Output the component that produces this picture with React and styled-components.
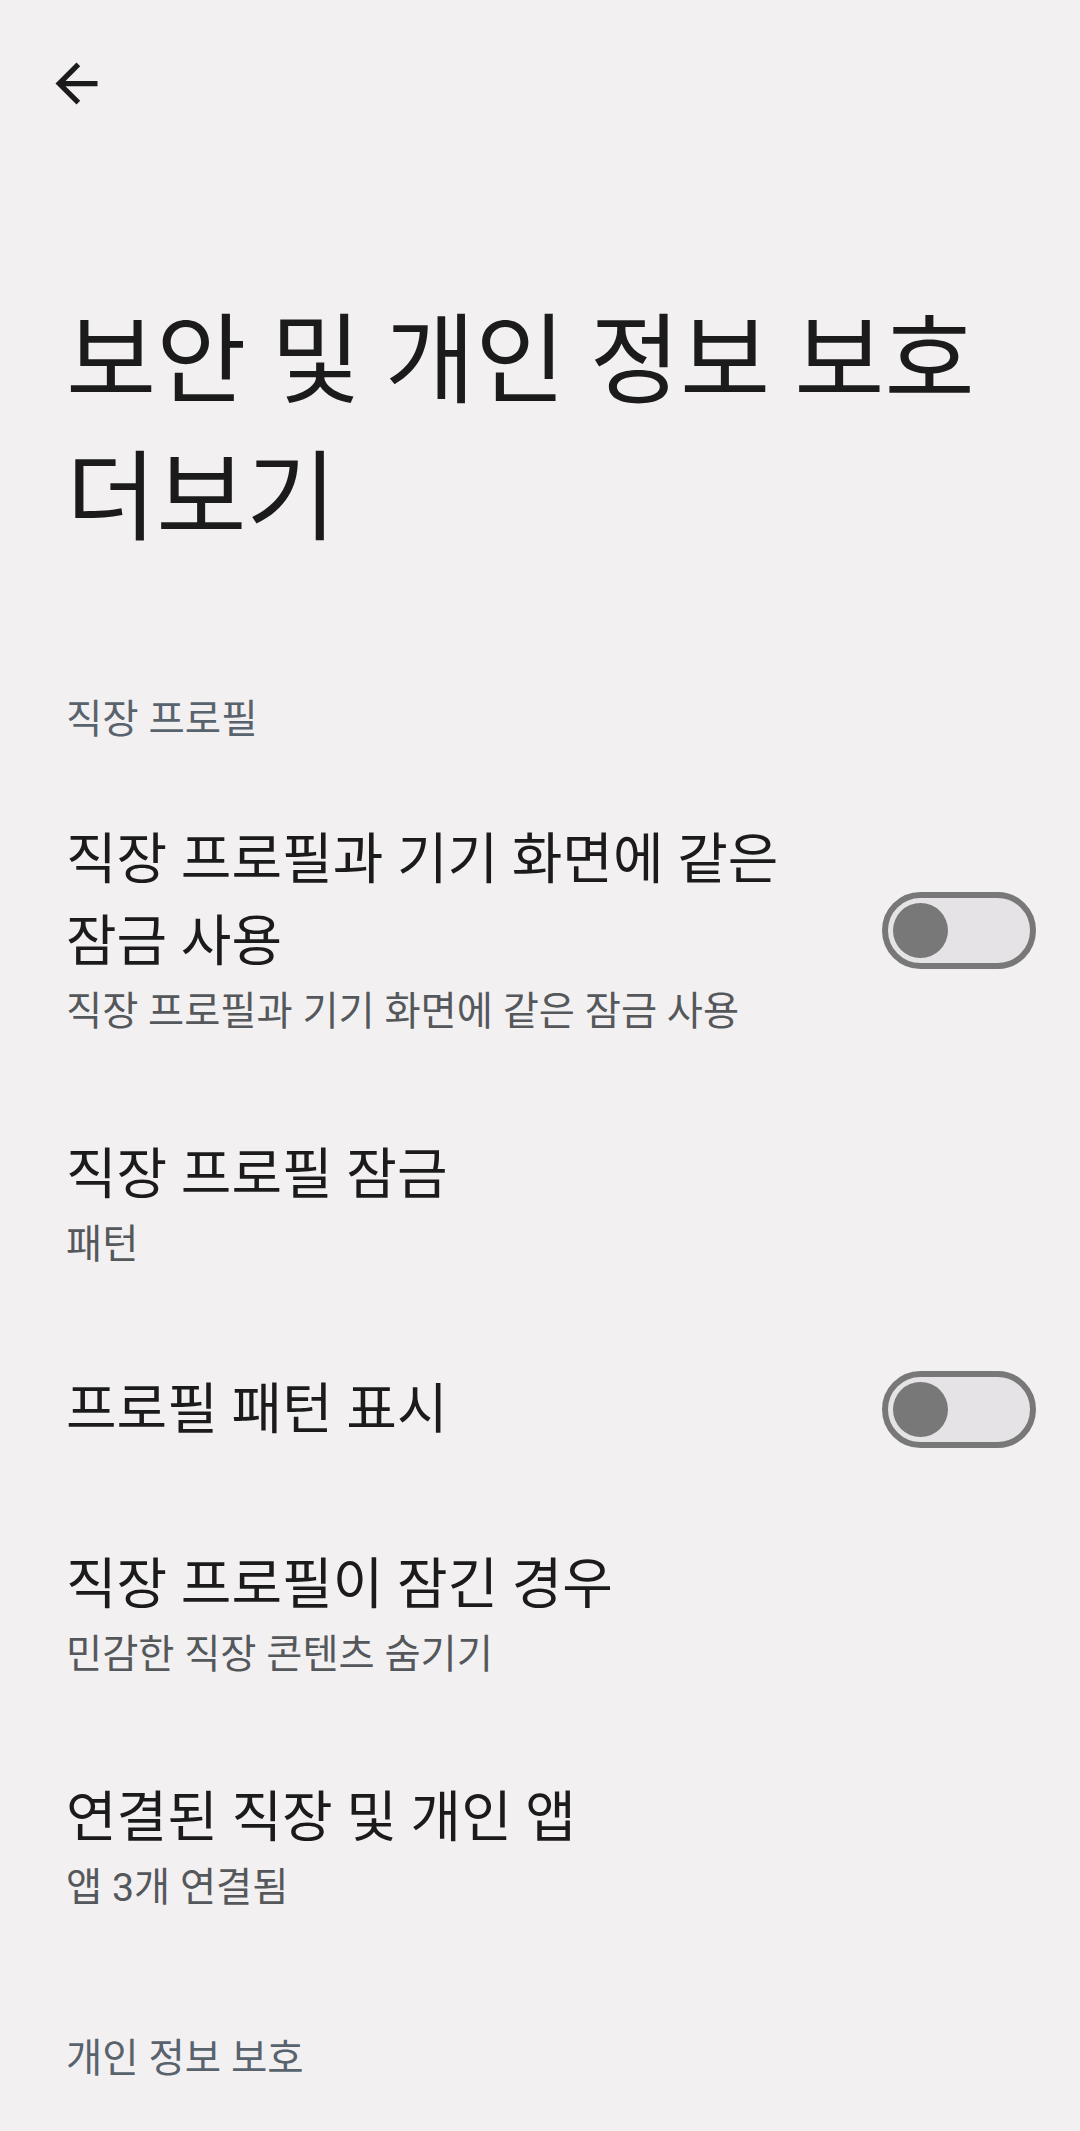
import React from 'react';
import styled, { createGlobalStyle } from 'styled-components';

const GlobalStyle = createGlobalStyle`
  html, body {
    margin: 0;
    padding: 0;
    background: #f3f0f2;
  }
  body {
    font-family: Roboto, "Noto Sans CJK KR", sans-serif;
    color: #1b1b1b;
    word-break: keep-all;
  }
`;

const Page = styled.div`
  min-height: 2131px;
  background: #f3f0f2;
`;

const TopBar = styled.div`
  display: flex;
  align-items: center;
  padding: 52px 0 0 45px;
`;

const BackButton = styled.button`
  width: 63px;
  height: 63px;
  padding: 0;
  border: none;
  background: transparent;
  display: flex;
  align-items: center;
  justify-content: center;
  color: #1b1b1b;
`;

const Title = styled.h1`
  margin: 178px 0 0;
  padding: 0 66px 55px;
  font-size: 98px;
  line-height: 137px;
  font-weight: 400;
  color: #1b1b1b;
`;

const Category = styled.div`
  padding: 72px 66px 24px;
  font-size: 39.5px;
  line-height: 52px;
  color: #58636d;
`;

const Row = styled.div`
  box-sizing: border-box;
  min-height: 177px;
  display: flex;
  align-items: center;
  gap: 60px;
  padding: 48px 44px 43px 66px;
`;

const TextCol = styled.div`
  flex: 1;
  min-width: 0;
  display: flex;
  flex-direction: column;
`;

const ItemTitle = styled.div`
  font-size: 55px;
  line-height: 82px;
  color: #1b1b1b;
`;

const Summary = styled.div`
  margin-top: 1px;
  font-size: 39.3px;
  line-height: 59px;
  color: #55585b;
`;

const Track = styled.div`
  flex: none;
  box-sizing: border-box;
  width: 154px;
  height: 77px;
  border: 6px solid #787878;
  border-radius: 39px;
  background: #e5e3e5;
  display: flex;
  align-items: center;
  padding-left: 5px;
`;

const Thumb = styled.div`
  width: 55px;
  height: 55px;
  border-radius: 50%;
  background: #787878;
`;

const BackArrow = () => (
  <svg width="63" height="63" viewBox="0 0 24 24" fill="currentColor">
    <path d="M20 11H7.83l5.59-5.59L12 4l-8 8 8 8 1.41-1.41L7.83 13H20v-2z" />
  </svg>
);

const Switch = () => (
  <Track>
    <Thumb />
  </Track>
);

const items = [
  { title: '직장 프로필과 기기 화면에 같은 잠금 사용', summary: '직장 프로필과 기기 화면에 같은 잠금 사용', toggle: true },
  { title: '직장 프로필 잠금', summary: '패턴' },
  { title: '프로필 패턴 표시', toggle: true },
  { title: '직장 프로필이 잠긴 경우', summary: '민감한 직장 콘텐츠 숨기기' },
  { title: '연결된 직장 및 개인 앱', summary: '앱 3개 연결됨' },
];

const SettingRow = ({ title, summary, toggle }) => (
  <Row>
    <TextCol>
      <ItemTitle>{title}</ItemTitle>
      {summary && <Summary>{summary}</Summary>}
    </TextCol>
    {toggle && <Switch />}
  </Row>
);

export default function App() {
  return (
    <Page>
      <GlobalStyle />
      <TopBar>
        <BackButton aria-label="뒤로">
          <BackArrow />
        </BackButton>
      </TopBar>
      <Title>보안 및 개인 정보 보호 더보기</Title>
      <Category>직장 프로필</Category>
      {items.map((item) => (
        <SettingRow key={item.title} {...item} />
      ))}
      <Category>개인 정보 보호</Category>
    </Page>
  );
}
